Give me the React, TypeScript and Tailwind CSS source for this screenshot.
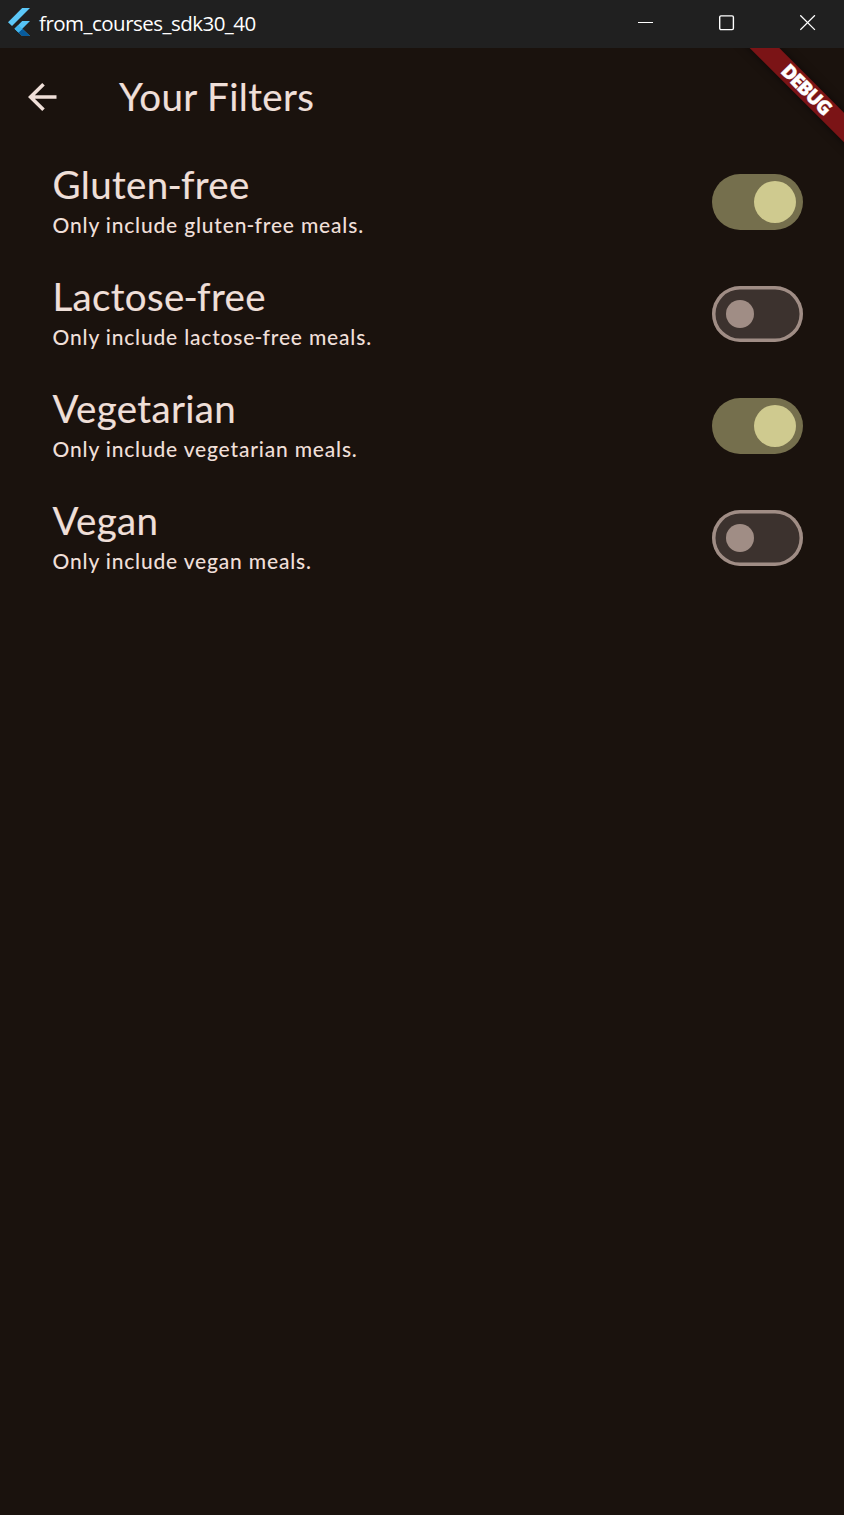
import { Fragment, useState } from "react";

const initialFilters = [
  { title: "Gluten-free", subtitle: "Only include gluten-free meals.", on: true },
  { title: "Lactose-free", subtitle: "Only include lactose-free meals.", on: false },
  { title: "Vegetarian", subtitle: "Only include vegetarian meals.", on: true },
  { title: "Vegan", subtitle: "Only include vegan meals.", on: false },
];

function FlutterLogo() {
  return (
    <svg width="22" height="28" viewBox="0 0 22 28" className="shrink-0">
      <path d="M0 14.2 14.2 0H22L4 18.1Z" fill="#5cc8f8" />
      <path d="M14.2 13H22L14.3 20.7 22 28H14.2L6.5 20.7Z" fill="#55c3f5" />
      <path d="M10.4 24.4 14.3 20.7 22 28H14.2Z" fill="#075b9d" />
      <path d="M6.5 20.7 10.4 16.9 14.3 20.7 10.4 24.4Z" fill="#3fb4ec" />
    </svg>
  );
}

function TitleBar() {
  return (
    <header className="flex h-12 items-center bg-[#202020] pl-2 text-white">
      <div className="pb-1">
        <FlutterLogo />
      </div>
      <span className="ml-[9px] pb-[2px] font-['Open_Sans',sans-serif] text-[20.5px] leading-[46px] tracking-[-0.52px]">
        from_courses_sdk30_40
      </span>
      <div className="ml-auto flex gap-[65px] pr-7 pb-[2px]">
        <button aria-label="Minimize">
          <svg width="16" height="16" viewBox="0 0 16 16" stroke="currentColor">
            <path d="M0 7.5h15" />
          </svg>
        </button>
        <button aria-label="Maximize">
          <svg width="16" height="16" viewBox="0 0 16 16" fill="none" stroke="currentColor" strokeWidth="1.4">
            <rect x=".7" y=".9" width="13.7" height="13.7" rx="1.3" />
          </svg>
        </button>
        <button aria-label="Close">
          <svg width="16" height="16" viewBox="0 0 16 16" stroke="currentColor" strokeWidth="1.3">
            <path d="m.3.3 14.6 14.6M14.9.3.3 14.9" />
          </svg>
        </button>
      </div>
    </header>
  );
}

/* Text whose hyphens are set a little tighter than the font's own. */
function TightHyphens({ text }: { text: string }) {
  return text.split("-").map((part, i) => (
    <Fragment key={i}>
      {i > 0 && <span className="-mr-[0.03em] -ml-[0.03em]">-</span>}
      {part}
    </Fragment>
  ));
}

function Toggle({ on, onClick, label }: { on: boolean; onClick: () => void; label: string }) {
  return (
    <button
      role="switch"
      aria-checked={on}
      aria-label={label}
      onClick={onClick}
      className={
        on
          ? "flex h-14 w-[91px] items-center justify-end rounded-full bg-[#756f4d] pr-[7px]"
          : "flex h-14 w-[91px] items-center rounded-full bg-[#3c322e] pl-[14px] shadow-[inset_0_0_0_3.5px_#a08d85]"
      }
    >
      <span className={on ? "size-[42px] rounded-full bg-[#cfca8f]" : "size-7 rounded-full bg-[#a08d85]"} />
    </button>
  );
}

export default function App() {
  const [filters, setFilters] = useState(initialFilters);
  const flip = (index: number) =>
    setFilters(filters.map((f, i) => (i === index ? { ...f, on: !f.on } : f)));

  return (
    <div className="flex h-[1515px] w-[844px] flex-col bg-[#1a120d] font-['Lato',sans-serif] text-[#efdfd8]">
      <TitleBar />
      <main className="relative flex-1 overflow-hidden">
        <div className="flex h-[98px] items-center pl-7">
          <button aria-label="Back">
            <svg width="28.5" height="28" viewBox="4 4 16 16" preserveAspectRatio="none" fill="currentColor">
              <path d="M20 11H7.83l5.59-5.59L12 4l-8 8 8 8 1.41-1.41L7.83 13H20v-2z" />
            </svg>
          </button>
          <h1 className="ml-[62.5px] pb-[2px] text-[38.5px] leading-[49px] tracking-[0.38px] [-webkit-text-stroke:0.15px]">
            Your Filters
          </h1>
        </div>
        <ul>
          {filters.map((f, i) => (
            <li key={f.title} className="flex h-28 items-center justify-between pr-[41px] pl-[52.5px]">
              <div className="pb-[4px]">
                <h2 className="text-[38.5px] leading-[44px] tracking-[0.34px] [-webkit-text-stroke:0.15px]">
                  <TightHyphens text={f.title} />
                </h2>
                <p className="pt-[5px] text-[21px] leading-7 font-medium tracking-[0.82px]">
                  <TightHyphens text={f.subtitle} />
                </p>
              </div>
              <Toggle on={f.on} label={f.title} onClick={() => flip(i)} />
            </li>
          ))}
        </ul>
        <div className="absolute top-[29.3px] left-[720.2px] flex h-[21px] w-[168px] rotate-45 items-center justify-center bg-[#7b1416] pb-px pl-[6px] font-['Noto_Sans','Open_Sans',sans-serif] text-[19.5px] leading-none font-black tracking-[-1.1px] text-white shadow-[0_0_10px_rgba(0,0,0,0.5)] [-webkit-text-stroke:0.3px]">
          DEBUG
        </div>
      </main>
    </div>
  );
}
